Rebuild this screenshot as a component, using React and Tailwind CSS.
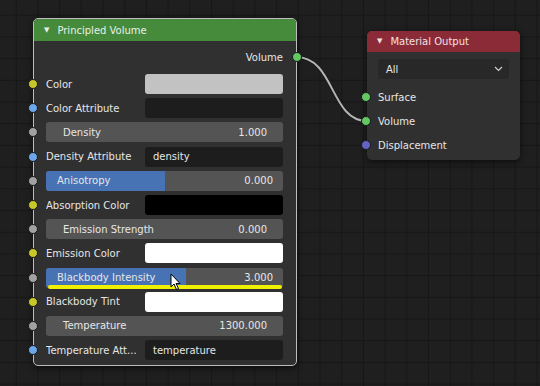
const FONT = { fontFamily: '"DejaVu Sans", "Liberation Sans", sans-serif' };

function Socket({ color, side = "left" }) {
    return (
        <span
            className={`absolute top-1/2 -translate-y-1/2 w-[10px] h-[10px] rounded-full border border-[#1a1a1a] ${side === "left" ? "left-[-6px]" : "right-[-6px]"}`}
            style={{ background: color }}
        />
    );
}

const YEL = "#c7c729";
const BLU = "#6ba6e8";
const GRY = "#a1a1a1";

function Row({ sock, children }) {
    return (
        <div className="relative h-[24.2px] flex items-center pl-[12px] pr-[13px]">
            {sock && <Socket color={sock} />}
            {children}
        </div>
    );
}

function ColorRow({ label, swatch, sock = YEL }) {
    return (
        <Row sock={sock}>
            <span className="flex-1 truncate">{label}</span>
            <div className="w-[138px] h-[20px] rounded-[3px]" style={{ background: swatch }} />
        </Row>
    );
}

function TextRow({ label, value }) {
    return (
        <Row sock={BLU}>
            <span className="flex-1 truncate">{label}</span>
            <div className="w-[138px] h-[20px] rounded-[3px] bg-[#1d1d1d] flex items-center pl-[8px]">{value}</div>
        </Row>
    );
}

function NumRow({ label, value }) {
    return (
        <Row sock={GRY}>
            <div className="flex-1 h-[20px] rounded-[3px] bg-[#545454] flex items-center justify-between pl-[17px] pr-[16px]">
                <span>{label}</span>
                <span>{value}</span>
            </div>
        </Row>
    );
}

function FactorRow({ label, value, fill }) {
    return (
        <Row sock={GRY}>
            <div className="relative flex-1 h-[20px] rounded-[3px] bg-[#545454] overflow-hidden flex items-center justify-between pl-[11px] pr-[10px]">
                <div className="absolute left-0 top-0 bottom-0 bg-[#4772b3]" style={{ width: fill }} />
                <span className="relative">{label}</span>
                <span className="relative">{value}</span>
            </div>
        </Row>
    );
}

export default function App() {
    return (
        <div
            className="relative w-[540px] h-[386px] overflow-hidden bg-[#1f1f1f] text-[10px] text-[#e6e6e6]"
            style={FONT}
        >
            <svg className="absolute inset-0" width="540" height="386">
                <defs>
                    <pattern id="g" x="-5" y="-6" width="21.7" height="21.7" patternUnits="userSpaceOnUse">
                        <path d="M21.7 0V21.7H0" fill="none" stroke="#141414" strokeWidth="1.6" />
                    </pattern>
                </defs>
                <rect width="540" height="386" fill="url(#g)" />
                <path d="M296 57 C 335 57, 330 121, 367 121" fill="none" stroke="#1a1a1a" strokeWidth="3.5" />
                <path d="M296 57 C 335 57, 330 121, 367 121" fill="none" stroke="#b4b4b4" strokeWidth="2" />
            </svg>

            {/* Principled Volume */}
            <div className="absolute left-[33px] top-[18px] w-[264px] h-[348px] rounded-[5px] border border-[#bdbdbd] bg-[#303030] shadow-[0_2px_6px_rgba(0,0,0,0.6)]">
                <div className="h-[22px] rounded-t-[4px] bg-[#468a3c] flex items-center pl-[10px] text-[#e8f0e6]">
                    <span className="text-[7px] mr-[8px]">▼</span>
                    <span>Principled Volume</span>
                </div>
                <div className="pt-[4px]">
                    <div className="relative h-[24px] flex items-center justify-end pr-[13px] mb-[3px]">
                        <span>Volume</span>
                        <Socket color="#63c763" side="right" />
                    </div>
                    <ColorRow label="Color" swatch="#c2c2c2" />
                    <TextRow label="Color Attribute" value="" />
                    <NumRow label="Density" value="1.000" />
                    <TextRow label="Density Attribute" value="density" />
                    <FactorRow label="Anisotropy" value="0.000" fill="50%" />
                    <ColorRow label="Absorption Color" swatch="#000000" />
                    <NumRow label="Emission Strength" value="0.000" />
                    <ColorRow label="Emission Color" swatch="#ffffff" />
                    <div className="relative">
                        <FactorRow label="Blackbody Intensity" value="3.000" fill="59%" />
                        <div className="absolute left-[14px] right-[14px] top-[19px] h-[4px] rounded-full bg-[#f0f000]" />
                        <svg className="absolute left-[136px] top-[7px]" width="12" height="18" viewBox="0 0 12 18">
                            <path d="M1 1 L1 14 L4 11 L6.5 16.5 L8.5 15.5 L6 10.5 L10 10.5 Z" fill="#ffffff" stroke="#000000" strokeWidth="1" strokeLinejoin="round" />
                        </svg>
                    </div>
                    <ColorRow label="Blackbody Tint" swatch="#ffffff" />
                    <NumRow label="Temperature" value="1300.000" />
                    <TextRow label="Temperature Att..." value="temperature" />
                </div>
            </div>

            {/* Material Output */}
            <div className="absolute left-[367px] top-[31px] w-[153px] h-[129px] rounded-[5px] bg-[#303030] shadow-[0_2px_6px_rgba(0,0,0,0.6)]">
                <div className="h-[21px] rounded-t-[5px] bg-[#8c2b38] flex items-center pl-[10px] text-[#f0e0e2]">
                    <span className="text-[7px] mr-[8px]">▼</span>
                    <span>Material Output</span>
                </div>
                <div className="px-[11px] pt-[7px]">
                    <div className="h-[20px] rounded-[3px] bg-[#282828] flex items-center justify-between pl-[8px] pr-[6px]">
                        <span>All</span>
                        <svg width="9" height="6" viewBox="0 0 9 6">
                            <path d="M1 1 L4.5 4.5 L8 1" fill="none" stroke="#d0d0d0" strokeWidth="1.2" />
                        </svg>
                    </div>
                </div>
                <div className="pt-[6px]">
                    {[
                        ["Surface", "#63c763"],
                        ["Volume", "#63c763"],
                        ["Displacement", "#6363c7"],
                    ].map(([l, c]) => (
                        <div key={l} className="relative h-[24px] flex items-center pl-[11px]">
                            <Socket color={c} />
                            <span>{l}</span>
                        </div>
                    ))}
                </div>
            </div>
        </div>
    );
}
